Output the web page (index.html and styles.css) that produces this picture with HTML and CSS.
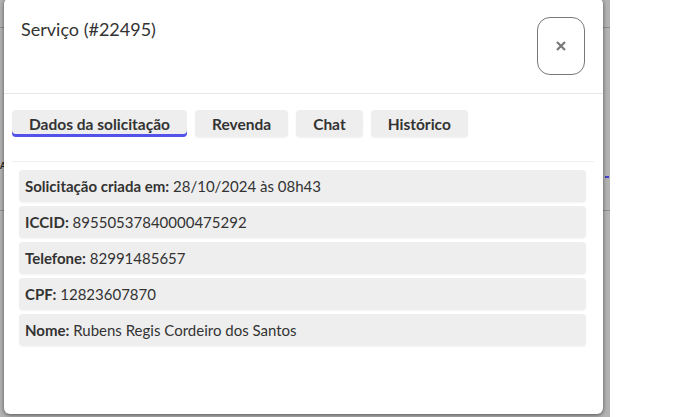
FILE: index.html
```html
<!DOCTYPE html>
<html lang="pt-BR">
<head>
<meta charset="utf-8">
<title>Serviço</title>
<link rel="stylesheet" href="styles.css">
</head>
<body>
<div class="page">
  <div class="backdrop">
    <span class="bg-line bg-line-1"></span>
    <span class="bg-line bg-line-2"></span>
    <span class="bg-letter">A</span>
    <span class="bg-mark"></span>
  </div>
  <div class="modal">
    <header class="modal-header">
      <h1 class="modal-title">Serviço (#22495)</h1>
      <button class="close-btn" aria-label="Fechar">
        <svg width="10" height="10" viewBox="0 0 10 10"><path d="M1 1 L9 9 M9 1 L1 9" stroke="#777" stroke-width="2.2" stroke-linecap="butt"/></svg>
      </button>
    </header>
    <nav class="tabs">
      <button class="tab active">Dados da solicitação</button>
      <button class="tab">Revenda</button>
      <button class="tab">Chat</button>
      <button class="tab">Histórico</button>
    </nav>
    <div class="divider"></div>
    <ul class="rows">
      <li class="row"><b>Solicitação criada em:</b> 28/10/2024 às 08h43</li>
      <li class="row"><b>ICCID:</b> 89550537840000475292</li>
      <li class="row"><b>Telefone:</b> 82991485657</li>
      <li class="row"><b>CPF:</b> 12823607870</li>
      <li class="row"><b>Nome:</b> Rubens Regis Cordeiro dos Santos</li>
    </ul>
  </div>
</div>
</body>
</html>
```

FILE: styles.css
```css
* { box-sizing: border-box; }
html, body { margin: 0; padding: 0; }
body {
  background: #ffffff;
  font-family: Lato, "Liberation Sans", sans-serif;
  color: #333;
  width: 688px;
  height: 417px;
  overflow: hidden;
}
.page {
  position: relative;
  width: 688px;
  height: 417px;
}
.backdrop {
  position: absolute;
  left: 0;
  top: 0;
  width: 610px;
  height: 417px;
  background: #b3b3b3;
}
.bg-line {
  position: absolute;
  left: 0;
  right: 0;
  height: 1px;
  background: #8e8e8e;
}
.bg-line-1 { top: 27px; }
.bg-line-2 { top: 210px; }
.bg-letter {
  position: absolute;
  left: 0;
  top: 160px;
  font-size: 9px;
  font-weight: 700;
  color: #222;
}
.bg-mark {
  position: absolute;
  left: 605px;
  top: 176px;
  width: 4px;
  height: 2px;
  background: #4040d0;
}
.modal {
  position: absolute;
  left: 4px;
  top: -2px;
  width: 599px;
  height: 416px;
  background: #fff;
  border-radius: 6px;
  box-shadow: 0 1px 4px rgba(0,0,0,0.55);
  display: flex;
  flex-direction: column;
}
.modal-header {
  display: flex;
  justify-content: space-between;
  align-items: flex-start;
  padding: 19px 18px 0 17px;
  height: 96px;
  border-bottom: 1px solid #e6e6e6;
}
.modal-title {
  margin: 0;
  font-size: 18px;
  font-weight: 400;
  color: #333;
  line-height: 24px;
}
.close-btn {
  width: 48px;
  height: 58px;
  border: 1px solid #777;
  border-radius: 13px;
  background: #fff;
  display: flex;
  align-items: center;
  justify-content: center;
  padding: 0;
}
.tabs {
  display: flex;
  gap: 8px;
  padding: 16px 8px 0 8px;
}
.tab {
  font-family: inherit;
  font-size: 15.5px;
  font-weight: 700;
  color: #333;
  background: #eeeeee;
  border: none;
  border-radius: 4px;
  height: 27px;
  padding: 0 17px;
  box-shadow: 0 1px 2px rgba(0,0,0,0.06);
}
.tab.active {
  box-shadow: inset 0 -3px 0 #5353ec;
}
.divider {
  height: 1px;
  background: #efefef;
  margin: 24px 9px 0 8px;
}
.rows {
  list-style: none;
  margin: 8px 0 0 0;
  padding: 0 17px 0 15px;
  display: flex;
  flex-direction: column;
  gap: 4px;
}
.row {
  background: #eeeeee;
  border-radius: 4px;
  height: 32px;
  padding: 0 6px;
  display: flex;
  align-items: center;
  font-size: 15px;
  color: #333;
  box-shadow: 0 1px 2px rgba(0,0,0,0.05);
  white-space: pre;
}
.row b { font-weight: 700; }
```
